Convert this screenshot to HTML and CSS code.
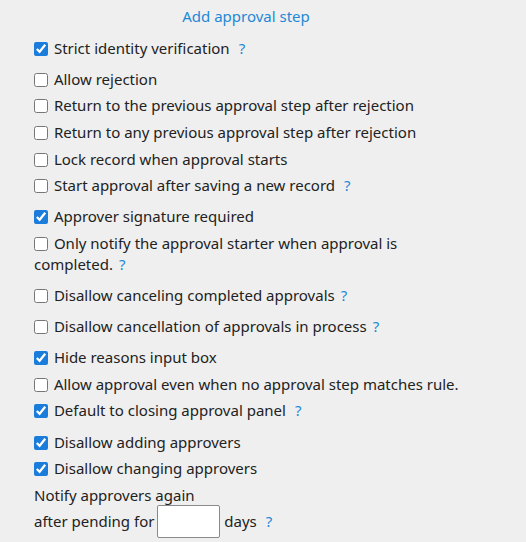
FILE: index.html
```html
<!DOCTYPE html>
<html>
<head>
<meta charset="utf-8">
<link rel="stylesheet" href="styles.css">
</head>
<body>
<div class="panel">
  <div class="title"><a class="link">Add approval step</a></div>

  <div class="group">
    <label class="row"><input type="checkbox" checked> Strict identity verification<span class="help">?</span></label>
  </div>

  <div class="group">
    <label class="row"><input type="checkbox"> Allow rejection</label>
    <label class="row"><input type="checkbox"> Return to the previous approval step after rejection</label>
    <label class="row"><input type="checkbox"> Return to any previous approval step after rejection</label>
    <label class="row"><input type="checkbox"> Lock record when approval starts</label>
    <label class="row"><input type="checkbox"> Start approval after saving a new record<span class="help">?</span></label>
  </div>

  <div class="group">
    <label class="row"><input type="checkbox" checked> Approver signature required</label>
    <label class="row wrap"><input type="checkbox"> Only notify the approval starter when approval is<br>completed.<span class="help small">?</span></label>
  </div>

  <div class="group">
    <label class="row"><input type="checkbox"> Disallow canceling completed approvals<span class="help small">?</span></label>
  </div>

  <div class="group">
    <label class="row"><input type="checkbox"> Disallow cancellation of approvals in process<span class="help small">?</span></label>
  </div>

  <div class="group">
    <label class="row"><input type="checkbox" checked> Hide reasons input box</label>
    <label class="row"><input type="checkbox"> Allow approval even when no approval step matches rule.</label>
    <label class="row"><input type="checkbox" checked> Default to closing approval panel<span class="help">?</span></label>
  </div>

  <div class="group">
    <label class="row"><input type="checkbox" checked> Disallow adding approvers</label>
    <label class="row"><input type="checkbox" checked> Disallow changing approvers</label>
    <div class="row">Notify approvers again</div>
    <div class="row input-row">after pending for<input type="text" class="days"> days<span class="help">?</span></div>
  </div>
</div>
</body>
</html>
```

FILE: styles.css
```css
html, body {
  margin: 0;
  padding: 0;
  background: #efefef;
}
body {
  font-family: "Noto Sans", "Open Sans", sans-serif;
  font-size: 15px;
  color: #222;
}
.panel {
  padding: 4px 0 0 34px;
  width: 470px;
}
.title {
  width: 424px;
  text-align: center;
  line-height: 24px;
  margin-bottom: 7px;
}
.link {
  color: #1e88d6;
  cursor: pointer;
}
.group {
  margin-bottom: 4.5px;
}
.row {
  display: block;
  line-height: 21px;
  padding: 2.8px 0;
}
.row input[type="checkbox"] {
  width: 14px;
  height: 14px;
  margin: 0 2px 0 0;
  vertical-align: -2px;
  accent-color: #1b7ddb;
}
.help {
  color: #1e88d6;
  margin-left: 9px;
}
.help.small {
  margin-left: 6px;
}
.input-row {
  display: flex;
  align-items: center;
  height: 21px;
  white-space: pre;
}
.days {
  box-sizing: border-box;
  width: 63px;
  height: 33px;
  margin: 0 0 0 3px;
  padding: 1px 2px;
  border: 1px solid #8a8a8a;
  border-radius: 2px;
  background: #fff;
  font: inherit;
}
```
